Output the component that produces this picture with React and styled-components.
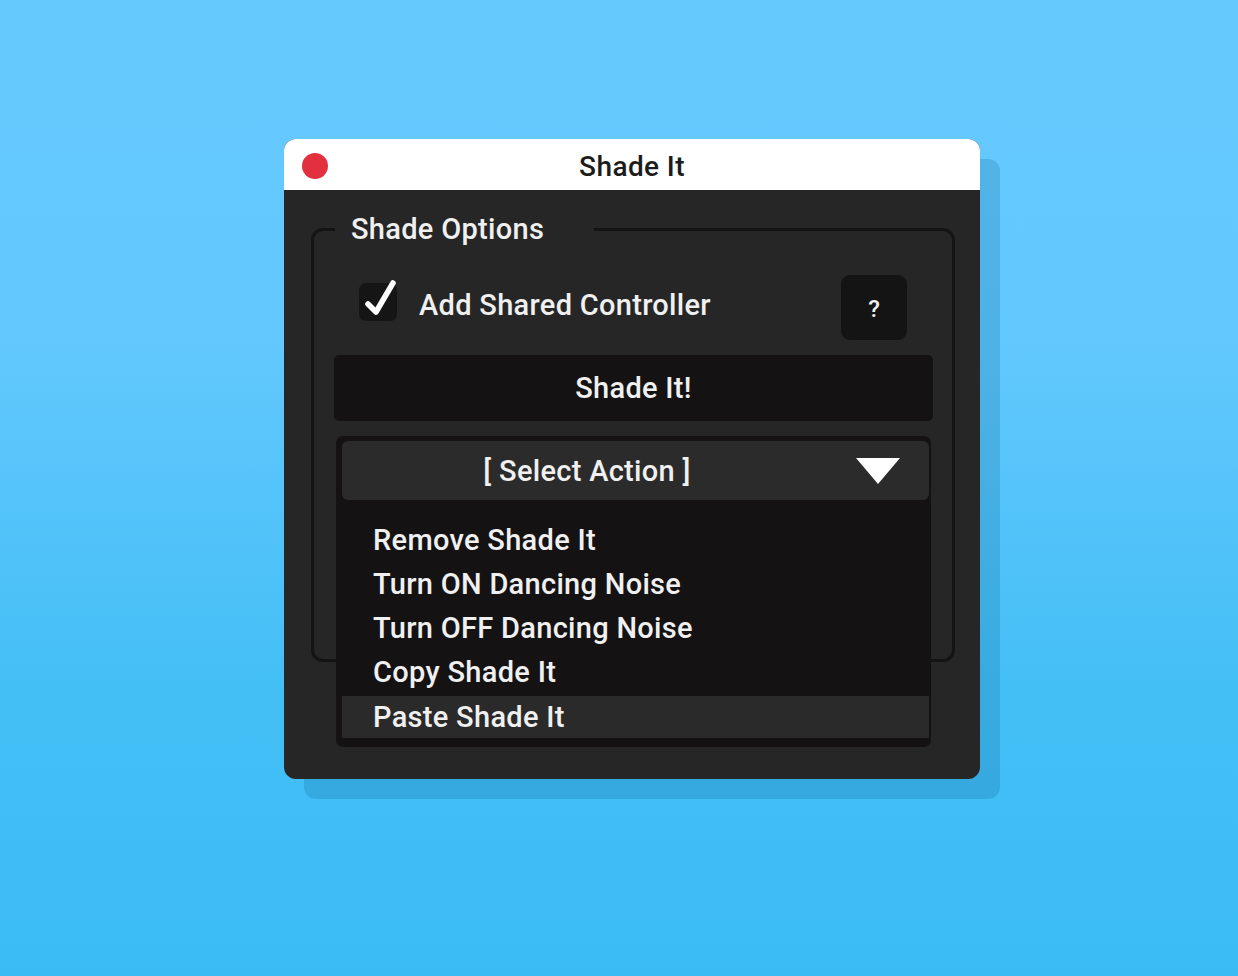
import styled, { createGlobalStyle } from "styled-components";

const GlobalStyle = createGlobalStyle`
  html, body {
    margin: 0;
    padding: 0;
  }
  body {
    font-family: "Roboto", "DejaVu Sans", sans-serif;
    background: #4cc3f9;
  }
`;

const Page = styled.div`
  width: 1238px;
  height: 976px;
  box-sizing: border-box;
  padding: 139px 0 0 284px;
  background: linear-gradient(180deg, #66c9fe 0%, #62c8fd 35%, #44bff6 70%, #3abcf3 100%);
  overflow: hidden;
`;

const Window = styled.div`
  width: 696px;
  height: 640px;
  border-radius: 12px;
  overflow: hidden;
  display: flex;
  flex-direction: column;
  box-shadow: 20px 20px 0 rgba(20, 110, 160, 0.24);
  background: #262626;
`;

const TitleBar = styled.div`
  height: 51px;
  flex-shrink: 0;
  background: #ffffff;
  display: flex;
  align-items: center;
  justify-content: center;
  position: relative;
  padding-top: 3px;
  box-sizing: border-box;
  font-size: 28px;
  font-weight: 500;
  color: #1c1c1c;
  letter-spacing: 0.4px;
`;

const CloseDot = styled.span`
  position: absolute;
  left: 18px;
  top: 14px;
  width: 26px;
  height: 26px;
  border-radius: 50%;
  background: #e2303f;
`;

const Body = styled.div`
  flex: 1;
  padding: 29px 25px 0 27px;
  position: relative;
`;

const Group = styled.fieldset`
  margin: 0;
  height: 443px;
  box-sizing: border-box;
  border: 3px solid #141414;
  border-radius: 12px;
  padding: 36px 19px 0 20px;
  color: #f0f0f0;
  min-width: 0;
`;

const Legend = styled.legend`
  font-size: 29px;
  font-weight: 500;
  letter-spacing: 0.3px;
  padding: 0 50px 0 16px;
  margin-left: 1px;
  line-height: 20px;
`;

const CheckRow = styled.div`
  display: flex;
  align-items: center;
  padding: 0 26px 0 25px;
  height: 65px;
`;

const CheckBox = styled.span`
  width: 38px;
  height: 38px;
  margin-bottom: 12px;
  border-radius: 7px;
  background: #151515;
  position: relative;
  flex-shrink: 0;
  svg {
    position: absolute;
    left: 4px;
    top: -4px;
  }
`;

const CheckLabel = styled.span`
  margin: 0 0 6px 22px;
  font-size: 29px;
  font-weight: 500;
  letter-spacing: 0.3px;
  flex: 1;
`;

const HelpButton = styled.button`
  all: unset;
  width: 66px;
  height: 65px;
  border-radius: 9px;
  background: #141414;
  color: #f0f0f0;
  font-family: "Roboto", sans-serif;
  font-size: 24px;
  font-weight: 500;
  display: flex;
  align-items: center;
  justify-content: center;
  padding-top: 3px;
  box-sizing: border-box;
`;

const ActionButton = styled.button`
  all: unset;
  display: flex;
  align-items: center;
  justify-content: center;
  box-sizing: border-box;
  margin-top: 15px;
  width: 599px;
  height: 66px;
  border-radius: 5px;
  background: #141213;
  color: #f0f0f0;
  font-family: "Roboto", sans-serif;
  font-size: 29px;
  font-weight: 500;
  letter-spacing: 0.3px;
`;

const Select = styled.div`
  position: relative;
  margin: 15px 2px 0 2px;
  padding: 5px 2px 5px 6px;
  background: #141213;
  border-radius: 7px 7px 0 0;
`;

const SelectHeader = styled.div`
  height: 59px;
  border-radius: 6px;
  background: #2b2b2b;
  display: flex;
  align-items: center;
  padding: 0 29px 0 0;
  font-size: 29px;
  font-weight: 500;
  letter-spacing: 0.3px;
  color: #f0f0f0;
`;

const SelectValue = styled.span`
  flex: 1;
  text-align: center;
  padding-right: 24px;
  white-space: pre;
`;

const Menu = styled.ul`
  position: absolute;
  top: 100%;
  left: 0;
  right: 0;
  margin: 0;
  list-style: none;
  padding: 13px 2px 9px 6px;
  background: #141213;
  border-radius: 0 0 7px 7px;
  z-index: 2;
`;

const MenuItem = styled.li`
  height: ${(p) => (p.$tight ? "42px" : "44px")};
  margin-top: ${(p) => (p.$tight ? "2px" : "0")};
  display: flex;
  align-items: center;
  padding-left: 31px;
  font-size: 29px;
  font-weight: 500;
  letter-spacing: 0.3px;
  color: #f0f0f0;
  background: ${(p) => (p.$active ? "#2a2a2a" : "transparent")};
`;

const items = [
  "Remove Shade It",
  "Turn ON Dancing Noise",
  "Turn OFF Dancing Noise",
  "Copy Shade It",
  "Paste Shade It",
];

export default function App() {
  return (
    <Page>
      <GlobalStyle />
      <Window>
        <TitleBar>
          <CloseDot />
          Shade It
        </TitleBar>
        <Body>
          <Group>
            <Legend>Shade Options</Legend>
            <CheckRow>
              <CheckBox>
                <svg width="36" height="38" viewBox="0 0 36 38">
                  <path
                    d="M5 25 L13 33 L30 4"
                    fill="none"
                    stroke="#ffffff"
                    strokeWidth="5.5"
                    strokeLinecap="round"
                    strokeLinejoin="round"
                  />
                </svg>
              </CheckBox>
              <CheckLabel>Add Shared Controller</CheckLabel>
              <HelpButton>?</HelpButton>
            </CheckRow>
            <ActionButton>Shade It!</ActionButton>
            <Select>
              <SelectHeader>
                <SelectValue>[ Select Action ]</SelectValue>
                <svg width="44" height="26" viewBox="0 0 44 26">
                  <path d="M0 0 H44 L22 26 Z" fill="#ffffff" />
                </svg>
              </SelectHeader>
              <Menu>
                {items.map((label, i) => (
                  <MenuItem
                    key={label}
                    $active={i === items.length - 1}
                    $tight={i === items.length - 1}
                  >
                    {label}
                  </MenuItem>
                ))}
              </Menu>
            </Select>
          </Group>
        </Body>
      </Window>
    </Page>
  );
}
